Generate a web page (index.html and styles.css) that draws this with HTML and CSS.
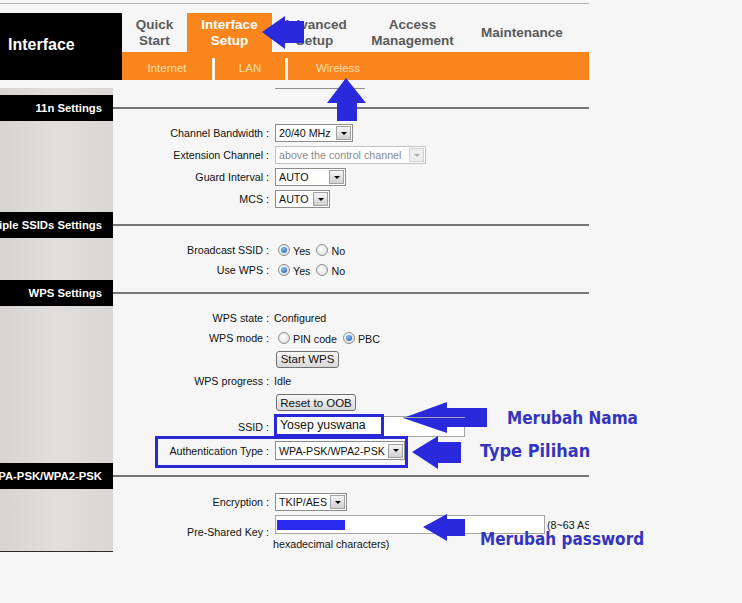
FILE: index.html
```html
<!DOCTYPE html>
<html>
<head>
<meta charset="utf-8">
<link rel="stylesheet" href="styles.css">
</head>
<body>
<div class="page">
  <div class="topline"></div>
  <header class="hdr">
    <div class="brand">Interface</div>
    <div class="nav">
      <div class="tabs">
        <div class="tab t1">Quick<br>Start</div>
        <div class="tab t2 active">Interface<br>Setup</div>
        <div class="tab t3">Advanced<br>Setup</div>
        <div class="tab t4">Access<br>Management</div>
        <div class="tab t5">Maintenance</div>
      </div>
      <div class="sub">
        <div class="si s1">Internet</div><div class="sep"></div>
        <div class="si s2">LAN</div><div class="sep"></div>
        <div class="si s3">Wireless</div>
      </div>
    </div>
  </header>

  <main class="grid">
    <div class="side sp"></div><div class="topcell"><div class="stub"></div></div>

    <div class="shead">11n Settings</div><div class="sline"></div>
    <div class="side"></div>
    <div class="form f11n">
      <div class="row r22"><div class="lb">Channel Bandwidth :</div><div class="val"><span class="sel w-cb"><span>20/40 MHz</span><span class="dd"></span></span></div></div>
      <div class="row r22"><div class="lb">Extension Channel :</div><div class="val"><span class="sel dis w-ext"><span>above the control channel</span><span class="dd"></span></span></div></div>
      <div class="row r22"><div class="lb">Guard Interval :</div><div class="val"><span class="sel w-gi"><span>AUTO</span><span class="dd"></span></span></div></div>
      <div class="row r22"><div class="lb">MCS :</div><div class="val"><span class="sel w-mcs"><span>AUTO</span><span class="dd"></span></span></div></div>
    </div>

    <div class="shead">Multiple SSIDs Settings</div><div class="sline"></div>
    <div class="side"></div>
    <div class="form fssid">
      <div class="row r20"><div class="lb">Broadcast SSID :</div><div class="val"><span class="radio on"></span><span class="rl">Yes</span><span class="radio"></span><span class="rl">No</span></div></div>
      <div class="row r20"><div class="lb">Use WPS :</div><div class="val"><span class="radio on"></span><span class="rl">Yes</span><span class="radio"></span><span class="rl">No</span></div></div>
    </div>

    <div class="shead">WPS Settings</div><div class="sline"></div>
    <div class="side"></div>
    <div class="form fwps">
      <div class="row r20"><div class="lb">WPS state :</div><div class="val">Configured</div></div>
      <div class="row r20"><div class="lb">WPS mode :</div><div class="val"><span class="radio"></span><span class="rl">PIN code</span><span class="radio on"></span><span class="rl">PBC</span></div></div>
      <div class="row r22"><div class="lb"></div><div class="val"><span class="btn b1">Start WPS</span></div></div>
      <div class="row r22"><div class="lb">WPS progress :</div><div class="val">Idle</div></div>
      <div class="row r21"><div class="lb"></div><div class="val"><span class="btn b2">Reset to OOB</span></div></div>
      <div class="row r27"><div class="lb">SSID :</div><div class="val"><span class="inp ssid"></span></div></div>
      <div class="row r21"><div class="lb">Authentication Type :</div><div class="val"><span class="sel w-auth"><span>WPA-PSK/WPA2-PSK</span><span class="dd"></span></span></div></div>
    </div>

    <div class="shead">WPA-PSK/WPA2-PSK</div><div class="sline"></div>
    <div class="side last"></div>
    <div class="form fwpa">
      <div class="row r22"><div class="lb">Encryption :</div><div class="val"><span class="sel w-enc"><span>TKIP/AES</span><span class="dd"></span></span></div></div>
      <div class="row r38"><div class="lb">Pre-Shared Key :</div>
        <div class="val pskval">
          <div class="line1"><span class="inp psk"><span class="mask"></span></span><span class="hint">(8~63 ASCII characters or 64</span></div>
          <div class="line2">hexadecimal characters)</div>
        </div>
      </div>
    </div>
  </main>
</div>

<div class="ssidbox">Yosep yuswana</div>
<div class="authbox"></div>

<svg class="arrows" width="742" height="603" viewBox="0 0 742 603">
  <polygon points="262,32 285,16 285,21 304,21 304,43 285,43 285,49"/>
  <polygon points="346,78 366,103 357,103 357,121 337,121 337,103 327,103"/>
  <polygon points="403,418 447,402 447,408 487,408 487,427 447,427 447,433"/>
  <line x1="403" y1="417.5" x2="465" y2="417.5" class="gl"/>
  <polygon points="412,452 438,436 438,442 461,442 461,463 438,463 438,469"/>
  <polygon points="423,527 447,514 447,519 465,519 465,536 447,536 447,541"/>
</svg>

<div class="note n1">Merubah Nama</div>
<div class="note n2">Type Pilihan</div>
<div class="note n3">Merubah password</div>
</body>
</html>
```

FILE: styles.css
```css
* { box-sizing: border-box; }
html, body { margin: 0; padding: 0; }
body {
  background: #f6f6f6;
  font-family: "Liberation Sans", Arial, sans-serif;
  color: #111;
  width: 742px;
  height: 603px;
  position: relative;
  overflow: hidden;
}
.page { width: 589px; overflow: hidden; padding-top: 3px; }
.topline { height: 1px; background: #b5b5b5; }

.hdr { display: flex; height: 67px; margin-top: 9px; }
.brand {
  width: 122px; background: #000; color: #fff;
  font-weight: bold; font-size: 16px;
  display: flex; align-items: center; padding: 0 0 4px 8px;
}
.nav { flex: 1; display: flex; flex-direction: column; }
.tabs { display: flex; height: 39px; }
.tab {
  display: flex; align-items: center; justify-content: center; text-align: center;
  font-weight: bold; font-size: 13.5px; line-height: 16px; color: #5a5a5a;
}
.t1 { width: 65px; } .t2 { width: 85px; } .t3 { width: 85px; } .t4 { width: 111px; } .t5 { width: 108px; }
.tab.active { background: #f8861c; color: #fff; }
.sub { display: flex; height: 28px; background: #f8861c; color: #fcdcae; font-size: 11.5px; }
.si { display: flex; justify-content: center; align-items: center; padding-top: 3px; }
.s1 { width: 90px; } .s2 { width: 70px; } .s3 { width: 100px; }
.sep { width: 3px; background: #fff4e8; margin-top: 6px; }

.grid { display: grid; grid-template-columns: 113px 476px; margin-top: 8px; }
.side { background: linear-gradient(90deg, #d6d4d0, #e1dfdc 50%, #d9d7d3); }
.side.last { border-bottom: 1px solid #2a2a2a; }
.sp { height: 7px; }
.stub { margin-left: 162px; width: 90px; height: 1px; background: #8e8e8e; }
.shead {
  height: 26px; background: #000; color: #fff;
  font-weight: bold; font-size: 11.3px;
  display: flex; justify-content: flex-end; align-items: center;
  padding-right: 11px; white-space: nowrap; overflow: hidden;
}
.sline { height: 26px; display: flex; align-items: center; }
.sline::before { content: ""; flex: 1; height: 2px; background: #767676; }

.form { font-size: 10.7px; }
.f11n { padding: 1px 0 2px; }
.fssid { padding: 2px 0 0; }
.fwps { padding: 2px 0; }
.fwpa { padding: 2px 0 1px; }
.row { display: grid; grid-template-columns: 156px 1fr; column-gap: 5px; align-items: center; }
.r20 { height: 20px; } .r21 { height: 21px; } .r22 { height: 22px; } .r27 { height: 27px; } .r38 { height: 38px; }
.lb { text-align: right; white-space: nowrap; }
.val { white-space: nowrap; display: flex; align-items: center; }

.sel {
  display: inline-flex; align-items: center; justify-content: space-between;
  height: 18px; border: 1px solid #8c8c8c; background: #fff;
  padding-left: 3px; margin-left: 1px;
}
.dd {
  width: 15px; height: 14px; margin-right: 1px;
  border: 1px solid #a0a0a0; background: linear-gradient(#f5f5f5, #d0d0d0);
  display: flex; align-items: center; justify-content: center;
}
.dd::after { content: ""; border-left: 3px solid transparent; border-right: 3px solid transparent; border-top: 3px solid #000; }
.sel.dis { border-color: #c2c2c2; color: #8a8a8a; }
.sel.dis .dd { border-color: #d0d0d0; background: #eeeeee; }
.sel.dis .dd::after { border-top-color: #aaa; }
.w-cb { width: 78px; } .w-ext { width: 151px; } .w-gi { width: 71px; } .w-mcs { width: 55px; }
.w-enc { width: 72px; } .w-auth { width: 130px; height: 19px; }

.radio {
  display: inline-block; width: 12px; height: 12px; border-radius: 50%;
  border: 1px solid #8d8d8d; background: radial-gradient(circle at 40% 40%, #fff, #d8d8d8);
  position: relative; margin-left: 4px; flex: none;
}
.rl + .radio { margin-left: 1px; }
.radio.on::after {
  content: ""; position: absolute; left: 2px; top: 2px; width: 6px; height: 6px; border-radius: 50%;
  background: radial-gradient(circle at 40% 35%, #86bdf2, #1b56a6);
}
.rl { margin: 0 5px 0 3px; position: relative; top: 1px; }

.btn {
  display: inline-flex; align-items: center; justify-content: center;
  height: 17px; border: 1px solid #707070; border-radius: 3px;
  background: linear-gradient(#f8f8f8, #d8d8d8); font-size: 11.5px; margin-left: 2px;
}
.b1 { width: 63px; } .b2 { width: 80px; }

.inp { display: inline-block; background: #fff; border: 1px solid #a5a5a5; margin-left: 1px; }
.ssid { width: 190px; height: 21px; }
.pskval { flex-direction: column; align-items: flex-start; padding-top: 2px; height: 38px; }
.line1 { display: flex; align-items: center; height: 19px; }
.psk { width: 270px; height: 19px; }
.mask { display: block; width: 68px; height: 10px; margin: 4px 0 0 1px; background: #2a2aee; }
.hint { margin-left: 2px; }
.line2 { margin-top: 3px; line-height: 14px; margin-left: -1px; }

.ssidbox {
  position: absolute; left: 274px; top: 414px; width: 110px; height: 23px;
  border: 3px solid #2828d8; background: #fff;
  font-size: 12.3px; line-height: 17px; padding-left: 3px; color: #111;
}
.authbox {
  position: absolute; left: 155px; top: 436px; width: 253px; height: 32px;
  border: 3px solid #2828d8;
}
.arrows { position: absolute; left: 0; top: 0; pointer-events: none; }
.arrows polygon { fill: #2a2adc; }
.arrows .gl { stroke: #a5a5a5; stroke-width: 1; }

.note {
  position: absolute; font-family: "DejaVu Sans Condensed", "DejaVu Sans", sans-serif;
  font-weight: bold; color: #3434be; line-height: 20px; white-space: nowrap;
}
.n1 { left: 507px; top: 408px; font-size: 17px; }
.n2 { left: 480px; top: 441px; font-size: 18px; }
.n3 { left: 480px; top: 529px; font-size: 17px; }
```
